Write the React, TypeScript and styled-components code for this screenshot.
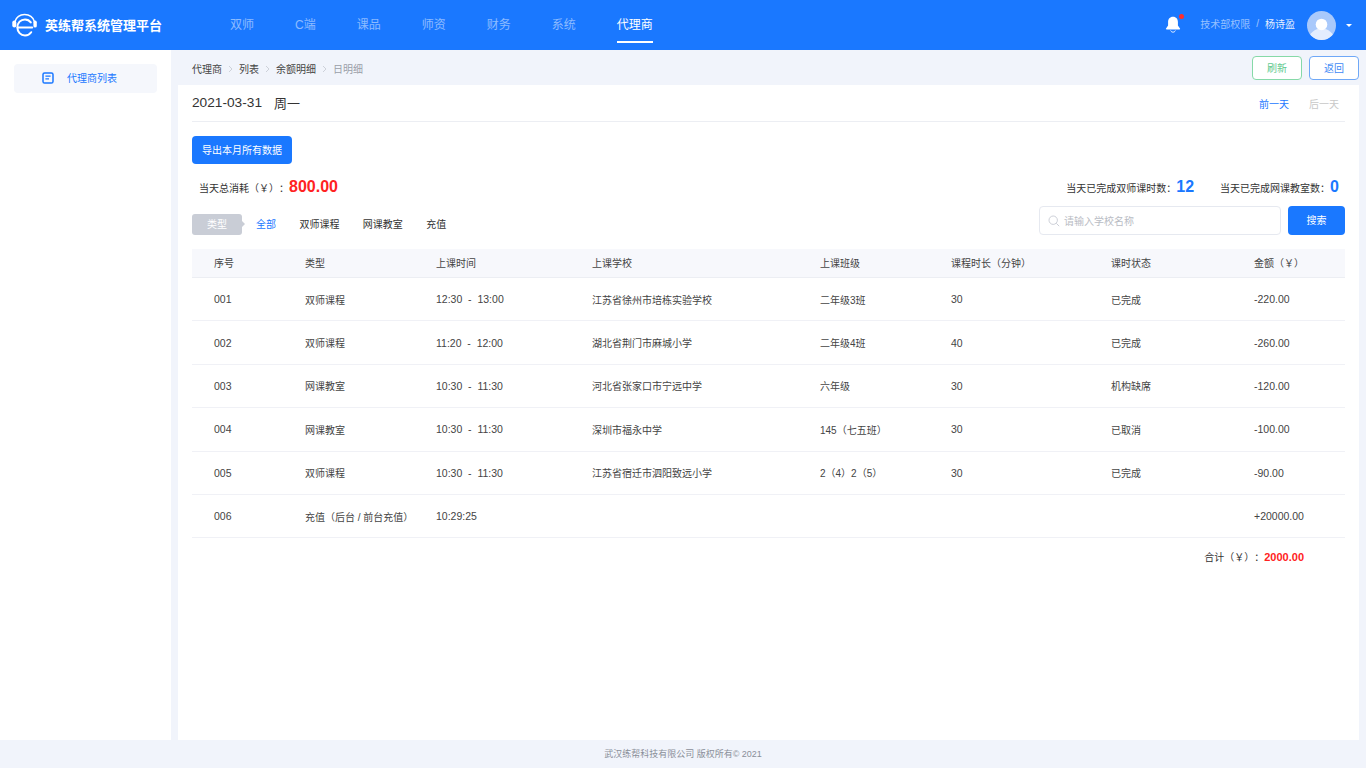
import React from "react";
import styled, { createGlobalStyle } from "styled-components";

const GlobalStyle = createGlobalStyle`
  html, body {
    margin: 0;
    padding: 0;
    background: #f1f4fb;
  }
  * {
    box-sizing: border-box;
  }
  body {
    font-family: "Liberation Sans", "Noto Sans CJK SC", sans-serif;
    font-size: 10px;
    color: #444;
    text-spacing-trim: space-all;
  }
`;

const navItems = ["双师", "C端", "课品", "师资", "财务", "系统", "代理商"];

const crumbs = ["代理商", "列表", "余额明细", "日明细"];

const filters = ["全部", "双师课程", "网课教室", "充值"];

const columns = ["序号", "类型", "上课时间", "上课学校", "上课班级", "课程时长（分钟）", "课时状态", "金额（￥）"];

const rows = [
  ["001", "双师课程", "12:30  -  13:00", "江苏省徐州市培栋实验学校", "二年级3班", "30", "已完成", "-220.00"],
  ["002", "双师课程", "11:20  -  12:00", "湖北省荆门市麻城小学", "二年级4班", "40", "已完成", "-260.00"],
  ["003", "网课教室", "10:30  -  11:30", "河北省张家口市宁远中学", "六年级", "30", "机构缺席", "-120.00"],
  ["004", "网课教室", "10:30  -  11:30", "深圳市福永中学", "145（七五班）", "30", "已取消", "-100.00"],
  ["005", "双师课程", "10:30  -  11:30", "江苏省宿迁市泗阳致远小学", "2（4）2（5）", "30", "已完成", "-90.00"],
  ["006", "充值（后台 / 前台充值）", "10:29:25", "", "", "", "", "+20000.00"],
];

const isNumeric = (value: string) => /^[-+\d:. ]+$/.test(value);

const App: React.FC = () => {
  return (
    <Page>
      <GlobalStyle />
      <Header>
        <Brand>
          <LogoIcon />
          <BrandName>英练帮系统管理平台</BrandName>
        </Brand>
        <Nav>
          {navItems.map((item) => (
            <NavItem key={item} $active={item === "代理商"}>
              {item}
            </NavItem>
          ))}
        </Nav>
        <UserArea>
          <BellWrap>
            <BellIcon />
            <RedDot />
          </BellWrap>
          <UserText>
            <Role>技术部权限</Role>
            <Slash>/</Slash>
            <UserName>杨诗盈</UserName>
          </UserText>
          <Avatar>
            <AvatarIcon />
          </Avatar>
          <Caret />
        </UserArea>
      </Header>

      <Body>
        <Sidebar>
          <SideItem>
            <ListIcon />
            <span>代理商列表</span>
          </SideItem>
        </Sidebar>

        <Content>
          <TopBar>
            <Crumbs>
              {crumbs.map((c, i) => (
                <React.Fragment key={c}>
                  {i > 0 && <ChevronIcon />}
                  <Crumb $last={i === crumbs.length - 1}>{c}</Crumb>
                </React.Fragment>
              ))}
            </Crumbs>
            <TopButtons>
              <OutlineButton $color="#86d9a8" $text="#5fca90">刷新</OutlineButton>
              <OutlineButton $color="#6fa8f7" $text="#3f8af5">返回</OutlineButton>
            </TopButtons>
          </TopBar>

          <Panel>
            <DateRow>
              <DateText>
                <DateValue>2021-03-31</DateValue>
                <span>周一</span>
              </DateText>
              <DayLinks>
                <DayLink $on>前一天</DayLink>
                <DayLink>后一天</DayLink>
              </DayLinks>
            </DateRow>

            <PrimaryButton>导出本月所有数据</PrimaryButton>

            <StatsRow>
              <Stat>
                当天总消耗（￥）：<TotalValue>800.00</TotalValue>
              </Stat>
              <RightStats>
                <Stat>
                  当天已完成双师课时数：<CountValue>12</CountValue>
                </Stat>
                <Stat>
                  当天已完成网课教室数：<CountValue>0</CountValue>
                </Stat>
              </RightStats>
            </StatsRow>

            <FilterRow>
              <FilterLabel>类型</FilterLabel>
              <Filters>
                {filters.map((f, i) => (
                  <FilterItem key={f} $active={i === 0}>
                    {f}
                  </FilterItem>
                ))}
              </Filters>
              <SearchArea>
                <SearchBox>
                  <SearchIcon />
                  <span>请输入学校名称</span>
                </SearchBox>
                <SearchButton>搜索</SearchButton>
              </SearchArea>
            </FilterRow>

            <TableHead>
              {columns.map((c) => (
                <Cell key={c}>{c}</Cell>
              ))}
            </TableHead>
            {rows.map((row) => (
              <TableRow key={row[0]}>
                {row.map((value, i) => (
                  <Cell key={i} $num={isNumeric(value)}>
                    {value}
                  </Cell>
                ))}
              </TableRow>
            ))}

            <SumRow>
              合计（￥）：<SumValue>2000.00</SumValue>
            </SumRow>
          </Panel>
        </Content>
      </Body>

      <Footer>武汉练帮科技有限公司 版权所有© 2021</Footer>
    </Page>
  );
};

export default App;

const LogoIcon = () => (
  <svg width="26" height="26" viewBox="0 0 26 26" fill="none">
    <path d="M3 9.5C4.4 5 8.2 2.4 12.6 2.4S21 5 22.4 9.5" stroke="#fff" strokeWidth="1.5" strokeLinecap="round" />
    <rect x="0.3" y="8.4" width="4" height="7.2" rx="2" fill="#fff" />
    <rect x="21.4" y="8.6" width="3.4" height="7" rx="1.7" fill="#fff" />
    <path d="M18.8 10.4C17.4 8.4 15.4 7.4 13 7.4C8.6 7.4 5.4 10.8 5.4 15.4C5.4 20 8.6 23.4 13 23.4C15.6 23.4 17.8 22.3 19.2 20.2" stroke="#fff" strokeWidth="2" strokeLinecap="round" />
    <path d="M5.6 15.6H20.2" stroke="#fff" strokeWidth="2" strokeLinecap="round" />
  </svg>
);

const BellIcon = () => (
  <svg width="16" height="17" viewBox="0 0 16 18">
    <path d="M8 .8C4.6.8 2.8 3.2 2.8 6.4V10L.6 13.2c-.3.5 0 1 .5 1h13.8c.5 0 .8-.5.5-1L13.2 10V6.4C13.2 3.2 11.4.8 8 .8z" fill="#fff" />
    <path d="M5.5 15.4c.5 1.1 1.4 1.7 2.5 1.7s2-.6 2.5-1.7" stroke="#fff" strokeWidth="1" fill="none" />
  </svg>
);

const AvatarIcon = () => (
  <svg width="29" height="29" viewBox="0 0 28 28">
    <circle cx="14" cy="14" r="14" fill="#a9c9fb" />
    <clipPath id="avatar-clip">
      <circle cx="14" cy="14" r="14" />
    </clipPath>
    <g clipPath="url(#avatar-clip)">
      <ellipse cx="14" cy="27" rx="12" ry="10" fill="#e3edfe" />
      <circle cx="14" cy="13" r="5.6" fill="#fff" />
    </g>
  </svg>
);

const ListIcon = () => (
  <svg width="12" height="12" viewBox="0 0 12 12" fill="none">
    <rect x="1" y="1" width="10" height="10" rx="1.6" stroke="#1a78ff" strokeWidth="1.5" />
    <path d="M3.4 4.2h5.2M3.4 6.8h3.6" stroke="#1a78ff" strokeWidth="1.2" />
  </svg>
);

const ChevronIcon = () => (
  <svg width="5" height="8" viewBox="0 0 5 8" fill="none">
    <path d="M1 1l3 3-3 3" stroke="#c4c8d0" strokeWidth="0.8" />
  </svg>
);

const SearchIcon = () => (
  <svg width="12" height="12" viewBox="0 0 12 12" fill="none">
    <circle cx="5.2" cy="5.2" r="4.2" stroke="#c6cad2" strokeWidth="0.9" />
    <path d="M8.3 8.3l2.9 2.9" stroke="#c6cad2" strokeWidth="0.9" />
  </svg>
);

const Page = styled.div`
  display: flex;
  flex-direction: column;
  width: 100%;
  height: 768px;
  overflow: hidden;
  background: #f1f4fb;
`;

const Header = styled.header`
  display: flex;
  align-items: center;
  flex: 0 0 50px;
  height: 50px;
  background: #1a78ff;
  padding: 0 14px 0 12px;
`;

const Brand = styled.div`
  display: flex;
  align-items: center;
  gap: 7px;
  width: 213px;
`;

const BrandName = styled.div`
  margin-top: -2px;
  font-size: 13px;
  font-weight: 700;
  color: #fff;
  white-space: nowrap;
`;

const Nav = styled.nav`
  display: flex;
  align-self: stretch;
  gap: 41px;
  padding-left: 5px;
`;

const NavItem = styled.div<{ $active?: boolean }>`
  position: relative;
  display: flex;
  align-items: center;
  padding-bottom: 3px;
  font-size: 12px;
  color: ${(p) => (p.$active ? "#fff" : "rgba(255, 255, 255, 0.5)")};
  ${(p) =>
    p.$active &&
    `
    &::after {
      content: "";
      position: absolute;
      left: 0;
      right: 0;
      bottom: 7px;
      height: 2px;
      background: #fff;
    }
  `}
`;

const UserArea = styled.div`
  display: flex;
  align-items: center;
  margin-left: auto;
  font-size: 10px;
`;

const BellWrap = styled.div`
  position: relative;
  display: flex;
  width: 16px;
  margin-top: -2px;
  margin-right: 19px;
`;

const RedDot = styled.i`
  position: absolute;
  top: -2px;
  right: -3px;
  width: 5px;
  height: 5px;
  border-radius: 50%;
  background: #ff2d2d;
`;

const UserText = styled.div`
  display: flex;
  align-items: center;
  margin-top: -3px;
`;

const Role = styled.span`
  color: rgba(255, 255, 255, 0.55);
`;

const Slash = styled.span`
  margin: 0 6px;
  color: rgba(255, 255, 255, 0.6);
`;

const UserName = styled.span`
  color: rgba(255, 255, 255, 0.9);
`;

const Avatar = styled.div`
  display: flex;
  margin: 0 10px 0 12px;
`;

const Caret = styled.i`
  width: 0;
  height: 0;
  border-left: 3px solid transparent;
  border-right: 3px solid transparent;
  border-top: 3px solid #fff;
`;

const Body = styled.div`
  display: flex;
  flex: 1;
  min-height: 0;
`;

const Sidebar = styled.aside`
  flex: 0 0 171px;
  background: #fff;
  padding: 14px;
`;

const SideItem = styled.div`
  display: flex;
  align-items: center;
  gap: 13px;
  height: 29px;
  padding-left: 28px;
  padding-bottom: 2px;
  border-radius: 4px;
  background: #f5f7fc;
  color: #1a78ff;
  font-size: 10px;
`;

const Content = styled.main`
  display: flex;
  flex-direction: column;
  flex: 1;
  min-width: 0;
  padding: 0 7px;
`;

const TopBar = styled.div`
  display: flex;
  align-items: center;
  justify-content: space-between;
  flex: 0 0 35px;
  padding-left: 14px;
`;

const Crumbs = styled.div`
  display: flex;
  align-items: center;
  gap: 6px;
  margin-top: 2px;
  font-size: 10px;
`;

const Crumb = styled.span<{ $last?: boolean }>`
  color: ${(p) => (p.$last ? "#9a9ea8" : "#444")};
`;

const TopButtons = styled.div`
  display: flex;
  gap: 7px;
`;

const OutlineButton = styled.button<{ $color: string; $text: string }>`
  width: 50px;
  height: 24px;
  padding: 0;
  border: 1px solid ${(p) => p.$color};
  border-radius: 4px;
  background: #fff;
  color: ${(p) => p.$text};
  font-family: inherit;
  font-size: 10px;
`;

const Panel = styled.section`
  flex: 1;
  background: #fff;
  padding: 0 14px;
`;

const DateRow = styled.div`
  display: flex;
  align-items: center;
  justify-content: space-between;
  height: 37px;
  border-bottom: 1px solid #eceef3;
  padding-right: 6px;
`;

const DateText = styled.div`
  display: flex;
  align-items: center;
  gap: 12px;
  margin-top: -2px;
  font-size: 13px;
  color: #333;
`;

const DateValue = styled.span`
  font-size: 13.7px;
`;

const DayLinks = styled.div`
  display: flex;
  gap: 20px;
  font-size: 10px;
`;

const DayLink = styled.span<{ $on?: boolean }>`
  color: ${(p) => (p.$on ? "#1a78ff" : "#c8c8c8")};
`;

const PrimaryButton = styled.button`
  display: block;
  width: 100px;
  height: 28px;
  margin-top: 14px;
  padding: 0 0 2px;
  border: 0;
  border-radius: 4px;
  background: #1a78ff;
  color: #fff;
  font-family: inherit;
  font-size: 10px;
`;

const StatsRow = styled.div`
  display: flex;
  align-items: center;
  justify-content: space-between;
  height: 24px;
  margin-top: 11px;
  padding-left: 7px;
  padding-right: 6px;
`;

const RightStats = styled.div`
  display: flex;
  gap: 26px;
`;

const Stat = styled.div`
  display: flex;
  align-items: center;
  font-size: 10px;
  color: #333;
`;

const TotalValue = styled.span`
  font-size: 16px;
  font-weight: 700;
  color: #ff2222;
`;

const CountValue = styled.span`
  font-size: 16px;
  font-weight: 700;
  color: #1a78ff;
`;

const FilterRow = styled.div`
  display: flex;
  align-items: center;
  height: 29px;
  margin-top: 7px;
`;

const FilterLabel = styled.div`
  position: relative;
  display: flex;
  align-items: center;
  justify-content: center;
  width: 50px;
  height: 21px;
  margin-top: 7px;
  padding-bottom: 2px;
  border-radius: 3px;
  background: #c9cdd6;
  color: #fff;
  font-size: 10px;

  &::after {
    content: "";
    position: absolute;
    left: 100%;
    top: 50%;
    margin-top: -3px;
    border-left: 3px solid #c9cdd6;
    border-top: 3px solid transparent;
    border-bottom: 3px solid transparent;
  }
`;

const Filters = styled.div`
  display: flex;
  gap: 23.4px;
  margin-top: 5px;
  margin-left: 14px;
`;

const FilterItem = styled.span<{ $active?: boolean }>`
  font-size: 10px;
  color: ${(p) => (p.$active ? "#1a78ff" : "#333")};
`;

const SearchArea = styled.div`
  display: flex;
  gap: 7px;
  margin-left: auto;
`;

const SearchBox = styled.div`
  display: flex;
  align-items: center;
  gap: 4px;
  width: 242px;
  height: 29px;
  padding-left: 8px;
  border: 1px solid #e6e9f0;
  border-radius: 4px;
  background: #fff;
  color: #b9bcc4;
  font-size: 10px;
`;

const SearchButton = styled.button`
  width: 57px;
  height: 29px;
  padding: 0 0 2px;
  border: 0;
  border-radius: 4px;
  background: #1a78ff;
  color: #fff;
  font-family: inherit;
  font-size: 10px;
`;

const gridColumns = "91px 131px 156px 228px 131px 160px 143px 113px";

const TableHead = styled.div`
  display: grid;
  grid-template-columns: ${gridColumns};
  align-items: center;
  height: 29px;
  margin-top: 14px;
  padding-bottom: 2px;
  background: #f7f8fc;
  border-bottom: 1px solid #eceef3;
  color: #444;
`;

const TableRow = styled.div`
  display: grid;
  grid-template-columns: ${gridColumns};
  align-items: center;
  height: 43.4px;
  border-bottom: 1px solid #f0f1f6;
  color: #444;
`;

const Cell = styled.div<{ $num?: boolean }>`
  padding-left: 22px;
  white-space: pre;
  font-size: ${(p) => (p.$num ? "10.5px" : "10px")};
`;

const SumRow = styled.div`
  display: flex;
  align-items: center;
  justify-content: flex-end;
  height: 37px;
  padding-right: 41px;
  color: #333;
`;

const SumValue = styled.span`
  font-size: 11px;
  font-weight: 700;
  color: #ff2222;
`;

const Footer = styled.footer`
  display: flex;
  align-items: center;
  justify-content: center;
  flex: 0 0 28px;
  padding-bottom: 2px;
  background: #f1f4fb;
  color: #8a8f99;
  font-size: 9px;
`;
